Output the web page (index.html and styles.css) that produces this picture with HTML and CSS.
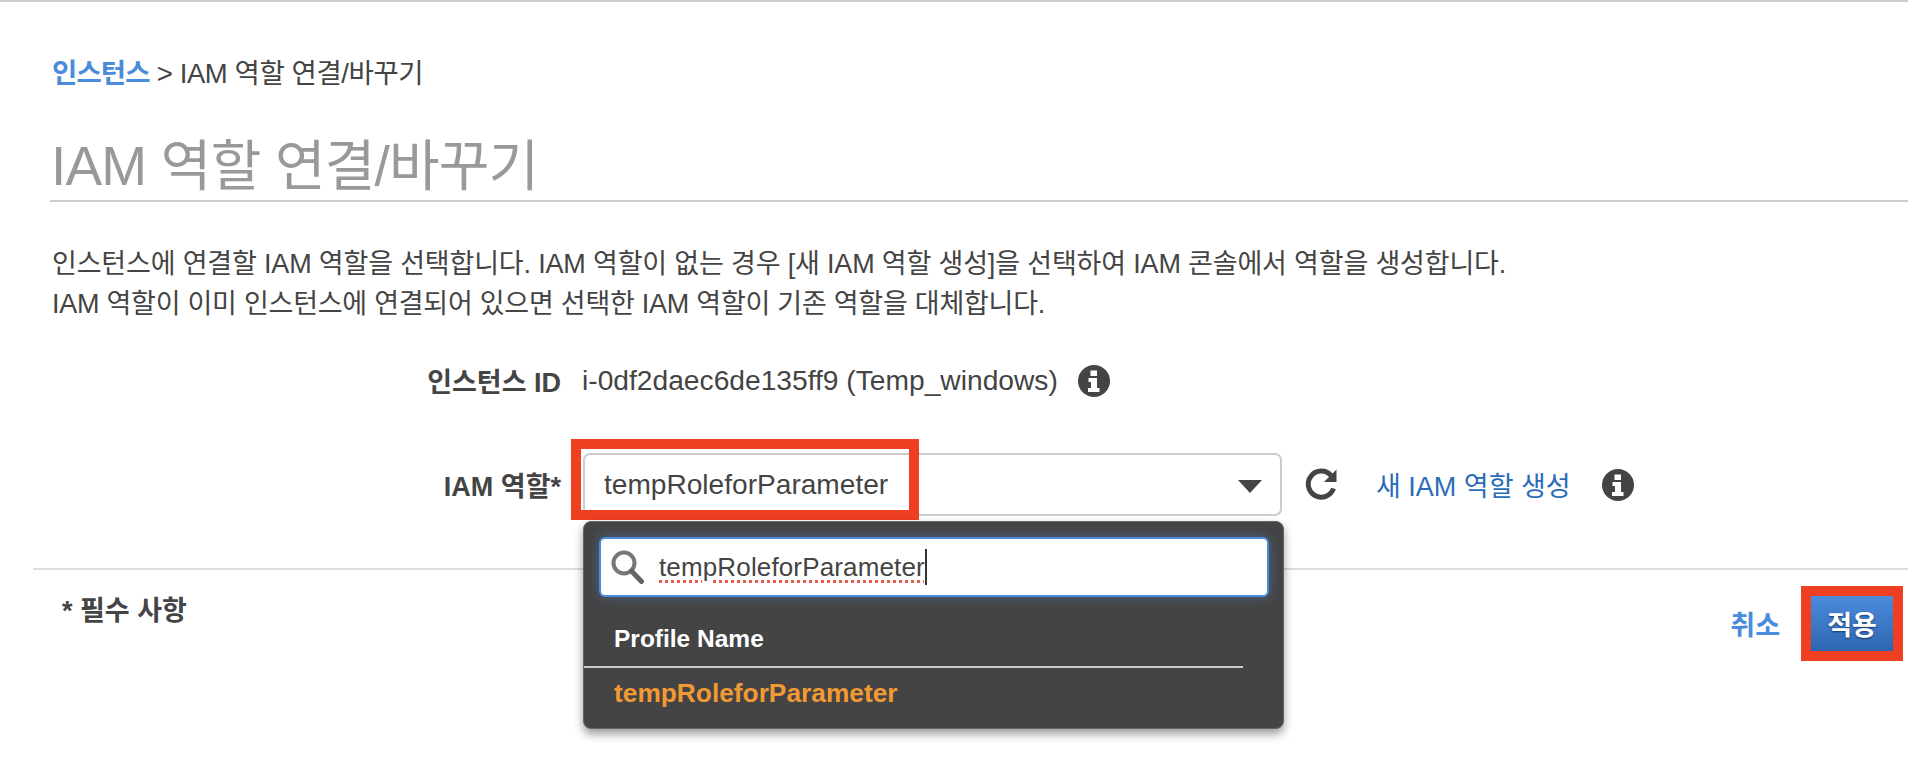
FILE: index.html
```html
<!DOCTYPE html>
<html lang="ko">
<head>
<meta charset="utf-8">
<title>IAM 역할 연결/바꾸기</title>
<link rel="stylesheet" href="styles.css">
</head>
<body>
<main class="page">
  <nav class="crumb"><a class="crumb-link">인스턴스</a> &gt; IAM 역할 연결/바꾸기</nav>
  <h1 class="title">IAM 역할 연결/바꾸기</h1>
  <div class="intro">
    <p>인스턴스에 연결할 IAM 역할을 선택합니다. IAM 역할이 없는 경우 [새 IAM 역할 생성]을 선택하여 IAM 콘솔에서 역할을 생성합니다.</p>
    <p class="intro-second">IAM 역할이 이미 인스턴스에 연결되어 있으면 선택한 IAM 역할이 기존 역할을 대체합니다.</p>
  </div>
  <div class="row row-id">
    <div class="label">인스턴스 ID</div>
    <div class="value">i-0df2daec6de135ff9 (Temp_windows)</div>
    <svg class="info info-id" viewBox="0 0 32 32"><circle cx="16" cy="16" r="16" fill="#444"/><rect x="12.5" y="5.5" width="6.5" height="5.5" fill="#fff"/><path d="M10.5 13h8.5v10h2.500v4h-11.500v-4h3v-6h-2.500z" fill="#fff"/></svg>
  </div>
  <div class="row row-role">
    <div class="label">IAM 역할*</div>
    <div class="select-wrap">
      <div class="select">
        <span>tempRoleforParameter</span>
        <span class="arrow"></span>
      </div>
      <div class="menu">
        <div class="search">
          <svg class="search-icon" viewBox="0 0 34 34"><circle cx="14" cy="13" r="10.500" fill="none" stroke="#777" stroke-width="4"/><path d="M21.500 21l10 10.500" stroke="#666" stroke-width="5" stroke-linecap="round"/></svg>
          <span class="search-text"><span class="typo">tempRoleforParameter</span></span>
        </div>
        <div class="menu-head">Profile Name</div>
        <div class="menu-item">tempRoleforParameter</div>
      </div>
      <div class="mark mark-role"></div>
    </div>
    <svg class="refresh" viewBox="0 0 38 34"><path d="M30.500 21.500a13 13 0 1 1-2.500-13" fill="none" stroke="#444" stroke-width="5"/><path d="M33.500 2.500v12.500h-12.500z" fill="#444"/></svg>
    <a class="new-role">새 IAM 역할 생성</a>
    <svg class="info info-role" viewBox="0 0 32 32"><circle cx="16" cy="16" r="16" fill="#444"/><rect x="12.5" y="5.5" width="6.5" height="5.5" fill="#fff"/><path d="M10.5 13h8.500v10h2.500v4h-11.500v-4h3v-6h-2.500z" fill="#fff"/></svg>
  </div>
  <footer class="footer">
    <div class="required">* 필수 사항</div>
    <div class="actions">
      <a class="cancel">취소</a>
      <div class="apply-wrap">
        <button class="apply">적용</button>
        <div class="mark mark-apply"></div>
      </div>
    </div>
  </footer>
</main>
</body>
</html>
```

FILE: styles.css
```css
* { box-sizing: border-box; }
html, body { margin: 0; height: 100%; background: #fff; overflow: hidden; }
body { font-family: "Liberation Sans", "Noto Sans CJK KR", sans-serif; color: #444; }
.page { border-top: 2px solid #ccc; height: 784px; padding-top: 54px; }
.crumb { margin-left: 52px; height: 36px; line-height: 36px; font-size: 27.5px; color: #444; letter-spacing: -0.42px; white-space: nowrap; }
.crumb-link { color: #4a8bdc; font-weight: 700; letter-spacing: -0.9px; }
.title { margin: 32px 0 0 50px; padding-left: 1px; height: 78px; border-bottom: 2px solid #ccc; font-size: 55px; line-height: 84px; font-weight: 400; color: #999; letter-spacing: -0.8px; white-space: nowrap; }
.intro { margin: 42px 0 0 52px; font-size: 27px; line-height: 40px; color: #444; letter-spacing: -0.17px; }
.intro p { margin: 0; white-space: nowrap; }
.intro-second { letter-spacing: -0.25px; }
.row { display: flex; align-items: center; }
.label { width: 561px; text-align: right; font-weight: 700; font-size: 27px; flex: none; }
.row-id { margin-top: 31px; height: 50px; }
.row-id .value { margin-left: 21px; font-size: 28.2px; white-space: nowrap; width: 496px; flex: none; }
.info { display: block; width: 32px; height: 32px; flex: none; }
.info-id { margin-top: 2px; margin-left: 0; }
.row-role { margin-top: 48px; height: 63px; }
.select-wrap { position: relative; margin-left: 22px; width: 699px; height: 63px; flex: none; }
.select { height: 63px; border: 2px solid #ccc; border-radius: 7px; background: #fff; display: flex; align-items: center; justify-content: space-between; padding: 0 18px 0 19px; font-size: 28.1px; }
.arrow { width: 0; height: 0; border-left: 12px solid transparent; border-right: 12px solid transparent; border-top: 13px solid #444; margin-top: 3px; }
.mark { position: absolute; border: 10px solid #ee3f22; }
.mark-role { left: -12px; top: -14px; width: 348px; height: 81px; }
.menu { position: absolute; left: 0; top: 68px; width: 701px; height: 208px; background: #444; border-radius: 8px; border: 1px solid #666; box-shadow: 0 5px 10px rgba(0,0,0,.4); z-index: 2; }
.search { margin: 15px 14px 0 15px; height: 60px; background: #fff; border: 2px solid #4a8bdc; border-radius: 6px; box-shadow: 0 0 12px rgba(90,150,230,.4); display: flex; align-items: center; padding-left: 9px; }
.search-icon { width: 34px; height: 34px; flex: none; }
.search-text { margin-left: 15px; font-size: 26px; letter-spacing: 0.14px; border-right: 2px solid #333; line-height: 36px; height: 36px; }
.typo { text-decoration: underline dotted #ea5a50 3px; text-underline-offset: 4px; }
.menu-head { margin-top: 21px; width: 659px; height: 50px; padding: 0 0 0 30px; border-bottom: 2px solid #ccc; color: #fff; font-weight: 700; font-size: 24.5px; line-height: 42px; }
.menu-item { padding-left: 30px; color: #f19a34; font-weight: 700; font-size: 26.3px; line-height: 50px; }
.refresh { display: block; width: 38px; height: 34px; margin: 0 0 2px 21px; flex: none; }
.new-role { margin-left: 35px; width: 226px; flex: none; color: #2b6cb9; font-size: 27px; white-space: nowrap; }
.footer { margin: 52px 0 0 33px; border-top: 2px solid #ddd; display: flex; justify-content: space-between; padding-left: 29px; }
.required { margin-top: 24px; font-weight: 700; font-size: 27px; line-height: 34px; }
.actions { display: flex; align-items: center; margin-top: 26px; margin-right: 15px; }
.cancel { color: #4a8bdc; font-weight: 700; font-size: 27px; margin-right: 31px; }
.apply-wrap { position: relative; }
.apply { display: block; width: 82px; height: 55px; border: 0; padding: 0; background: linear-gradient(#4b8cdb, #2d66b3); color: #fff; font: 700 27px "Liberation Sans", "Noto Sans CJK KR", sans-serif; text-shadow: 0 1px 2px rgba(0,0,0,.5); }
.mark-apply { left: -10px; top: -10px; width: 102px; height: 75px; }
```
